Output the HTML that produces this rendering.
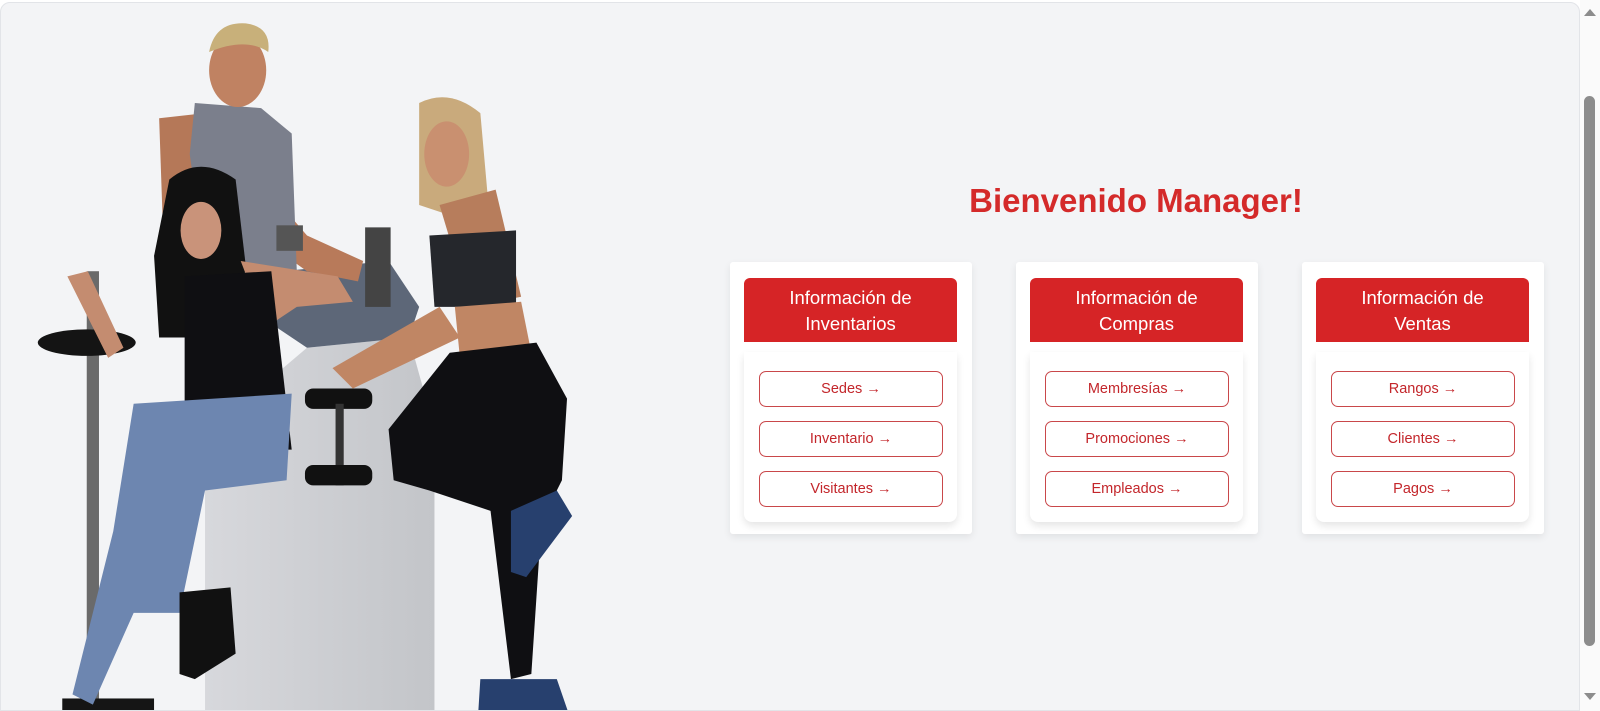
<!DOCTYPE html>
<html><head><meta charset="utf-8"><style>
html,body{margin:0;padding:0;width:1600px;height:711px;overflow:hidden;background:#fff;font-family:"Liberation Sans",sans-serif}
.page{position:absolute;left:0;top:2px;width:1580px;height:709px;background:#f3f4f6;border:1px solid #e2e4e8;border-radius:10px 10px 0 0;box-sizing:border-box;overflow:hidden}
.sb{position:absolute;left:1580px;top:0;width:20px;height:711px;background:#fafafa}
.thumb{position:absolute;left:1584px;top:96px;width:11px;height:550px;background:#8c8c8c;border-radius:6px}
.up{position:absolute;left:1584px;top:9px;width:0;height:0;border-left:6px solid transparent;border-right:6px solid transparent;border-bottom:7px solid #8c8c8c}
.dn{position:absolute;left:1584px;top:693px;width:0;height:0;border-left:6px solid transparent;border-right:6px solid transparent;border-top:7px solid #8c8c8c}
h1{position:absolute;left:916px;width:440px;top:182px;margin:0;text-align:center;color:#d42a2a;font-size:33px;font-weight:bold}
.card{position:absolute;top:262px;width:242px;height:272px;background:#fff;box-shadow:0 3px 8px rgba(0,0,0,.08);border-radius:3px}
.hd{position:absolute;left:14px;top:16px;width:213px;height:64px;background:#d62426;border-radius:6px 6px 0 0;color:#fff;text-align:center;font-size:18.5px;line-height:26px;padding-top:7px;box-sizing:border-box}
.bd{position:absolute;left:14px;top:90px;width:213px;height:170px;background:#fff;border-radius:0 0 8px 8px;box-shadow:0 4px 8px rgba(0,0,0,.1)}
.btn{position:absolute;left:15px;width:184px;height:36px;border:1px solid #c9474a;border-radius:7px;box-sizing:border-box;color:#c3262b;font-size:14.5px;text-align:center;line-height:34px}
</style></head><body>
<div class="page">
<svg width="612" height="725" viewBox="0 0 600 711" style="position:absolute;left:0;top:-2px">
<defs><linearGradient id="bx" x1="0" x2="1"><stop offset="0" stop-color="#d7d8dc"/><stop offset="1" stop-color="#c3c5c9"/></linearGradient></defs>
<polygon points="300,340 400,330 425,420 425,697 200,697 200,425" fill="url(#bx)"/>
<polygon points="275,265 380,255 410,300 400,330 300,340 270,320" fill="#5d6778"/>
<polygon points="155,115 200,110 205,220 190,265 160,260" fill="#b57858"/>
<polygon points="270,195 300,230 355,255 350,275 300,265 265,240" fill="#b87a5a"/>
<polygon points="190,100 255,105 285,130 290,265 200,260 185,150" fill="#7b7f8c"/>
<ellipse cx="232" cy="68" rx="28" ry="36" fill="#c08262"/>
<path d="M204,50 Q210,20 240,22 Q265,25 262,50 Q240,35 204,50Z" fill="#c8b07a"/>
<rect x="84" y="265" width="12" height="430" fill="#6a6a6a"/>
<ellipse cx="84" cy="335" rx="48" ry="13" fill="#141414"/>
<rect x="60" y="684" width="90" height="13" fill="#151515"/>
<path d="M165,175 Q195,150 230,175 L240,260 L230,330 L155,330 L150,250Z" fill="#111"/>
<ellipse cx="196" cy="225" rx="20" ry="28" fill="#c9937a"/>
<polygon points="235,255 330,270 345,295 290,300 260,320" fill="#c48c70"/>
<polygon points="65,270 85,265 120,340 105,350" fill="#c48c70"/>
<polygon points="180,270 265,265 285,440 180,440" fill="#0f0f12"/>
<polygon points="130,395 285,385 280,470 200,480 175,600 130,600 90,690 70,680 110,520" fill="#6d86b0"/>
<polygon points="175,580 225,575 230,640 190,665 175,660" fill="#111"/>
<rect x="298" y="380" width="66" height="20" rx="8" fill="#111"/>
<rect x="328" y="395" width="8" height="80" fill="#333"/>
<rect x="298" y="455" width="66" height="20" rx="8" fill="#111"/>
<rect x="270" y="220" width="26" height="25" fill="#555"/>
<rect x="357" y="222" width="25" height="78" fill="#444"/>
<path d="M410,100 Q440,85 470,110 L478,200 L455,215 L410,200Z" fill="#c9aa7c"/>
<ellipse cx="437" cy="150" rx="22" ry="32" fill="#c99070"/>
<polygon points="430,200 485,185 510,290 460,300" fill="#b77d5c"/>
<polygon points="420,230 505,225 505,300 425,300" fill="#25272c"/>
<polygon points="445,300 510,295 520,345 450,350" fill="#c08664"/>
<polygon points="325,360 430,300 450,330 345,380" fill="#c08664"/>
<polygon points="440,345 525,335 555,390 550,470 530,510 520,660 500,665 480,500 420,480 385,470 380,420" fill="#0f0f12"/>
<polygon points="500,500 545,480 560,505 515,565 500,560" fill="#27406e"/>
<polygon points="470,665 545,665 556,697 468,697" fill="#27406e"/>
</svg>
</div>
<h1>Bienvenido Manager!</h1>

<div class="card" style="left:730px"><div class="hd">Información de<br>Inventarios</div><div class="bd">
<div class="btn" style="top:19px">Sedes →</div><div class="btn" style="top:69px">Inventario →</div><div class="btn" style="top:119px">Visitantes →</div></div></div>

<div class="card" style="left:1016px"><div class="hd">Información de<br>Compras</div><div class="bd">
<div class="btn" style="top:19px">Membresías →</div><div class="btn" style="top:69px">Promociones →</div><div class="btn" style="top:119px">Empleados →</div></div></div>

<div class="card" style="left:1302px"><div class="hd">Información de<br>Ventas</div><div class="bd">
<div class="btn" style="top:19px">Rangos →</div><div class="btn" style="top:69px">Clientes →</div><div class="btn" style="top:119px">Pagos →</div></div></div>

<div class="sb"></div><div class="up"></div><div class="thumb"></div><div class="dn"></div>
</body></html>
